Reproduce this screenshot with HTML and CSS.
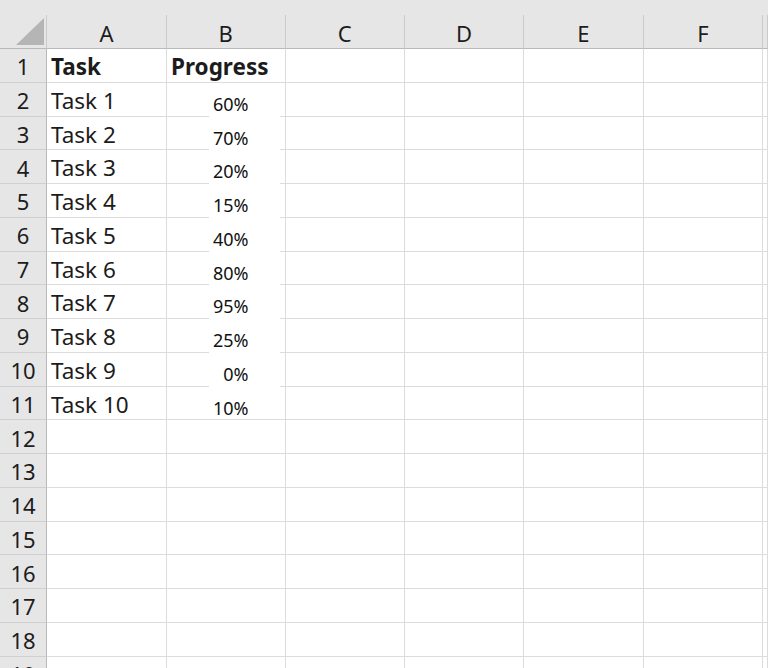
FILE: index.html
```html
<!DOCTYPE html>
<html lang="en">
<head>
   <meta charset="UTF-8">
   <title>Task progress</title>
   <link rel="stylesheet" href="styles.css">
</head>
<body>
   <div class="sheet">
       <div class="strip"></div>
       <div class="row head">
           <div class="cell corner"><span class="tri"></span></div>
           <div class="cell">A</div><div class="cell">B</div><div class="cell">C</div>
           <div class="cell">D</div><div class="cell">E</div><div class="cell">F</div><div class="cell"></div>
       </div>
       <div class="row">
           <div class="cell num">1</div><div class="cell txt bold">Task</div><div class="cell txt bold">Progress</div>
           <div class="cell"></div><div class="cell"></div><div class="cell"></div><div class="cell"></div><div class="cell"></div>
       </div>
       <div class="row">
           <div class="cell num">2</div><div class="cell txt">Task 1</div><div class="cell val"><span class="pct">60%</span></div>
           <div class="cell"></div><div class="cell"></div><div class="cell"></div><div class="cell"></div><div class="cell"></div>
       </div>
       <div class="row">
           <div class="cell num">3</div><div class="cell txt">Task 2</div><div class="cell val"><span class="pct">70%</span></div>
           <div class="cell"></div><div class="cell"></div><div class="cell"></div><div class="cell"></div><div class="cell"></div>
       </div>
       <div class="row">
           <div class="cell num">4</div><div class="cell txt">Task 3</div><div class="cell val"><span class="pct">20%</span></div>
           <div class="cell"></div><div class="cell"></div><div class="cell"></div><div class="cell"></div><div class="cell"></div>
       </div>
       <div class="row">
           <div class="cell num">5</div><div class="cell txt">Task 4</div><div class="cell val"><span class="pct">15%</span></div>
           <div class="cell"></div><div class="cell"></div><div class="cell"></div><div class="cell"></div><div class="cell"></div>
       </div>
       <div class="row">
           <div class="cell num">6</div><div class="cell txt">Task 5</div><div class="cell val"><span class="pct">40%</span></div>
           <div class="cell"></div><div class="cell"></div><div class="cell"></div><div class="cell"></div><div class="cell"></div>
       </div>
       <div class="row">
           <div class="cell num">7</div><div class="cell txt">Task 6</div><div class="cell val"><span class="pct">80%</span></div>
           <div class="cell"></div><div class="cell"></div><div class="cell"></div><div class="cell"></div><div class="cell"></div>
       </div>
       <div class="row">
           <div class="cell num">8</div><div class="cell txt">Task 7</div><div class="cell val"><span class="pct">95%</span></div>
           <div class="cell"></div><div class="cell"></div><div class="cell"></div><div class="cell"></div><div class="cell"></div>
       </div>
       <div class="row">
           <div class="cell num">9</div><div class="cell txt">Task 8</div><div class="cell val"><span class="pct">25%</span></div>
           <div class="cell"></div><div class="cell"></div><div class="cell"></div><div class="cell"></div><div class="cell"></div>
       </div>
       <div class="row">
           <div class="cell num">10</div><div class="cell txt">Task 9</div><div class="cell val"><span class="pct">0%</span></div>
           <div class="cell"></div><div class="cell"></div><div class="cell"></div><div class="cell"></div><div class="cell"></div>
       </div>
       <div class="row">
           <div class="cell num">11</div><div class="cell txt">Task 10</div><div class="cell val"><span class="pct last">10%</span></div>
           <div class="cell"></div><div class="cell"></div><div class="cell"></div><div class="cell"></div><div class="cell"></div>
       </div>
       <div class="row">
           <div class="cell num">12</div><div class="cell"></div><div class="cell"></div>
           <div class="cell"></div><div class="cell"></div><div class="cell"></div><div class="cell"></div><div class="cell"></div>
       </div>
       <div class="row">
           <div class="cell num">13</div><div class="cell"></div><div class="cell"></div>
           <div class="cell"></div><div class="cell"></div><div class="cell"></div><div class="cell"></div><div class="cell"></div>
       </div>
       <div class="row">
           <div class="cell num">14</div><div class="cell"></div><div class="cell"></div>
           <div class="cell"></div><div class="cell"></div><div class="cell"></div><div class="cell"></div><div class="cell"></div>
       </div>
       <div class="row">
           <div class="cell num">15</div><div class="cell"></div><div class="cell"></div>
           <div class="cell"></div><div class="cell"></div><div class="cell"></div><div class="cell"></div><div class="cell"></div>
       </div>
       <div class="row">
           <div class="cell num">16</div><div class="cell"></div><div class="cell"></div>
           <div class="cell"></div><div class="cell"></div><div class="cell"></div><div class="cell"></div><div class="cell"></div>
       </div>
       <div class="row">
           <div class="cell num">17</div><div class="cell"></div><div class="cell"></div>
           <div class="cell"></div><div class="cell"></div><div class="cell"></div><div class="cell"></div><div class="cell"></div>
       </div>
       <div class="row">
           <div class="cell num">18</div><div class="cell"></div><div class="cell"></div>
           <div class="cell"></div><div class="cell"></div><div class="cell"></div><div class="cell"></div><div class="cell"></div>
       </div>
       <div class="row">
           <div class="cell num">19</div><div class="cell"></div><div class="cell"></div>
           <div class="cell"></div><div class="cell"></div><div class="cell"></div><div class="cell"></div><div class="cell"></div>
       </div>
   </div>
</body>
</html>
```

FILE: styles.css
```css
body {
    margin: 0;
    font-family: "Noto Sans", sans-serif;
    color: #1c1c1c;
    background: #fff;
    overflow: hidden;
}
.sheet {
    width: 768px;
    height: 668px;
    overflow: hidden;
}
.strip {
    height: 15px;
    background: #e6e6e6;
}
.row {
    display: grid;
    grid-template-columns: 47px 120px 118.5px repeat(4, 119.4px) 1fr;
    height: 33.76px;
}
.cell {
    box-sizing: border-box;
    border-right: 1px solid #dcdcdc;
    border-bottom: 1px solid #dcdcdc;
    font-size: 22.5px;
    line-height: 1;
    display: flex;
    align-items: center;
    overflow: visible;
}
.head {
    height: 34px;
}
.head .cell {
    background: #e6e6e6;
    border-right-color: #cbcbcb;
    border-bottom-color: #b9b9b9;
    justify-content: center;
    padding-top: 2px;
    font-size: 22px;
}
.head .corner {
    justify-content: flex-start;
    align-items: flex-start;
    padding: 3px 0 0 16px;
}
.tri {
    width: 28px;
    height: 27px;
    background: #b5b5b5;
    clip-path: polygon(100% 0, 100% 100%, 0 100%);
}
.num {
    background: #e6e6e6;
    border-right-color: #b9b9b9;
    border-bottom-color: #cfcfcf;
    justify-content: center;
    padding-top: 2px;
    font-size: 22px;
}
.txt {
    padding: 4px 0 0 4px;
}
.bold {
    font-weight: bold;
}
.val {
    justify-content: flex-end;
    align-items: stretch;
}
.pct {
    box-sizing: border-box;
    width: 71px;
    height: calc(100% + 1px);
    margin-right: 5px;
    padding: 12px 31px 0 0;
    background: #fff;
    font-size: 18px;
    text-align: right;
    color: #111;
}
.pct.last {
    height: 100%;
}
```
